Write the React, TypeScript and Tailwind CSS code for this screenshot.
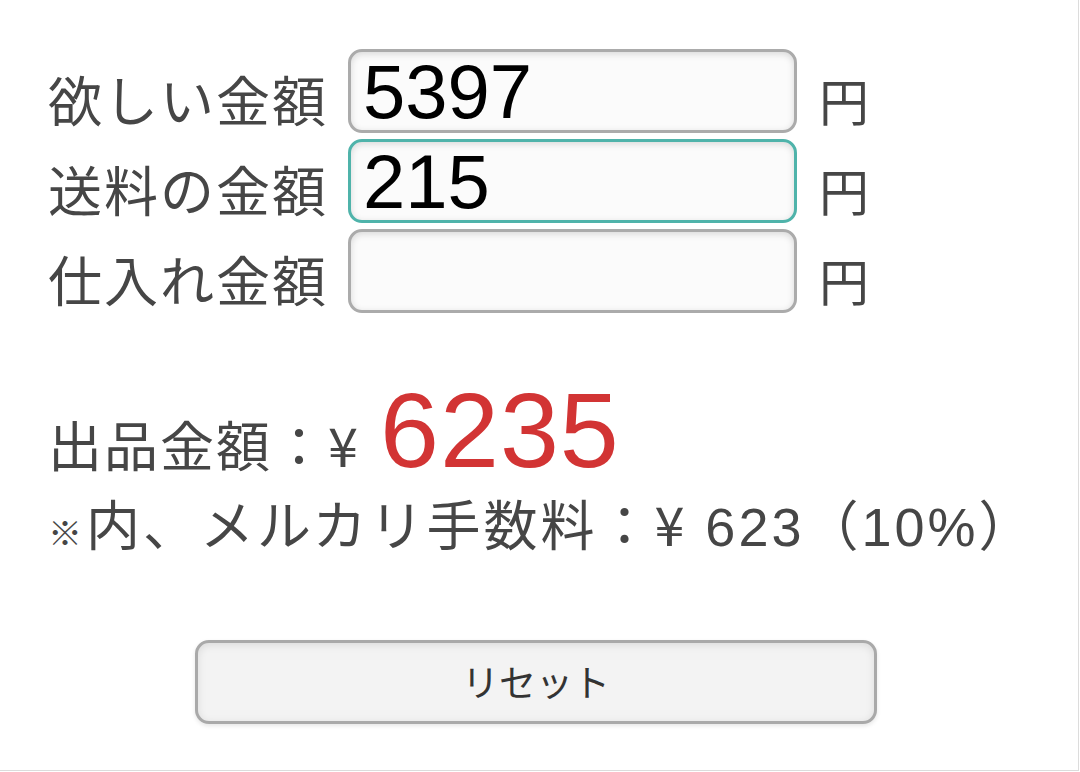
import React, { useState } from 'react';

const AmountRow: React.FC<{
  label: string;
  value: string;
  focused?: boolean;
  onChange: (v: string) => void;
}> = ({ label, value, focused, onChange }) => (
  <div className="flex items-center">
    <span className="w-[300px] mt-[16px] font-['Noto_Sans_CJK_JP','Noto_Sans',sans-serif] text-[54px] leading-none tracking-[2px] text-[#464646]">
      {label}
    </span>
    <input
      value={value}
      onChange={(e) => onChange(e.target.value)}
      inputMode="numeric"
      className={`w-[449px] h-[84px] px-[12px] rounded-[14px] border-[3px] bg-[#fbfbfb] font-['Liberation_Sans',Arial,sans-serif] text-[76px] leading-none text-black outline-none shadow-[inset_0_2px_7px_rgba(0,0,0,0.14)] ${
        focused ? 'border-[#4fb3aa]' : 'border-[#ababab]'
      }`}
    />
    <span className="ml-[22px] mt-[16px] font-['Noto_Sans_CJK_JP','Noto_Sans',sans-serif] text-[50px] leading-none text-[#464646]">
      円
    </span>
  </div>
);

export default function App() {
  const [want, setWant] = useState('5397');
  const [ship, setShip] = useState('215');
  const [cost, setCost] = useState('');

  return (
    <div className="w-[1079px] h-[771px] bg-white border-r border-b border-[#dcdcdc] overflow-hidden">
      {/* Inputs */}
      <div className="pl-[48px] pt-[49px] flex flex-col gap-[6px]">
        <AmountRow label="欲しい金額" value={want} onChange={setWant} />
        <AmountRow label="送料の金額" value={ship} focused onChange={setShip} />
        <AmountRow label="仕入れ金額" value={cost} onChange={setCost} />
      </div>

      {/* Result */}
      <div className="pl-[48px] mt-[64px] text-[#464646]">
        <div className="flex items-baseline">
          <span className="font-['Noto_Sans_CJK_JP','Noto_Sans',sans-serif] text-[54px] leading-none tracking-[2px]">
            出品金額：¥
          </span>
          <span className="ml-[20px] font-['Liberation_Sans',Arial,sans-serif] text-[106px] leading-none tracking-[1px] text-[#d23434]">
            6235
          </span>
        </div>
        <div className="mt-[13px] flex items-baseline font-['Liberation_Sans','Noto_Sans_CJK_JP',sans-serif] text-[54px] leading-none tracking-[3px] whitespace-pre">
          <span className="font-['Noto_Sans_CJK_JP',sans-serif] text-[34px] font-bold tracking-normal mr-[4px]">※</span>
          <span className="font-['Noto_Sans_CJK_JP',sans-serif]">内、メルカリ手数料：¥</span>
          <span> 623</span>
          <span className="font-['Noto_Sans_CJK_JP',sans-serif]">（</span>
          <span>10%</span>
          <span className="font-['Noto_Sans_CJK_JP',sans-serif]">）</span>
        </div>
      </div>

      {/* Reset */}
      <div className="mt-[86px] flex justify-center pr-[2px]">
        <button
          onClick={() => { setWant(''); setShip(''); setCost(''); }}
          className="w-[682px] h-[84px] ml-[-4px] rounded-[14px] border-[3px] border-[#a9a9a9] bg-[#f3f3f3] font-['Noto_Sans_CJK_JP',sans-serif] text-[37px] text-[#333] shadow-[inset_0_2px_8px_rgba(0,0,0,0.10),0_2px_4px_rgba(0,0,0,0.10)]"
        >
          リセット
        </button>
      </div>
    </div>
  );
}
